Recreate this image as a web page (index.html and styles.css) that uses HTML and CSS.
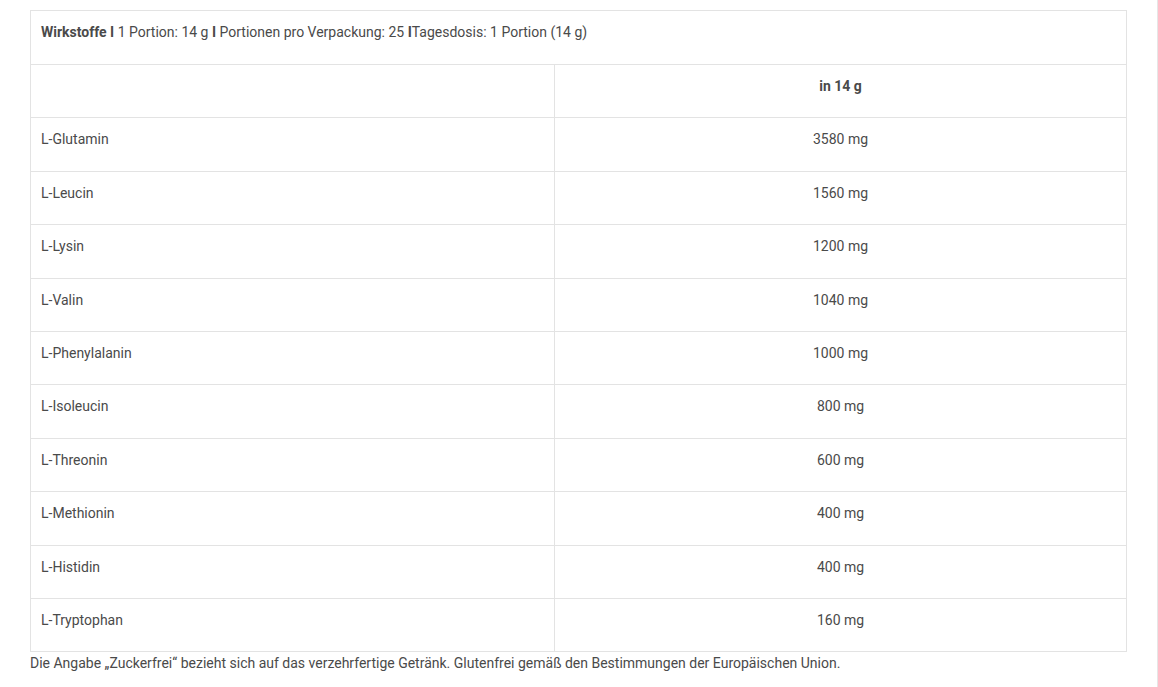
FILE: index.html
```html
<!DOCTYPE html>
<html lang="de">
<head>
<meta charset="utf-8">
<title>Wirkstoffe</title>
<link rel="stylesheet" href="styles.css">
</head>
<body>
<div class="page">
  <table class="nutri">
    <colgroup><col class="c-name"><col class="c-val"></colgroup>
    <tr class="intro"><td colspan="2"><b>Wirkstoffe I</b> 1 Portion: 14 g <b>I</b> Portionen pro Verpackung: 25 <b>I</b>Tagesdosis: 1 Portion (14 g)</td></tr>
    <tr><td></td><td class="val"><b>in 14 g</b></td></tr>
    <tr><td>L-Glutamin</td><td class="val">3580 mg</td></tr>
    <tr><td>L-Leucin</td><td class="val">1560 mg</td></tr>
    <tr><td>L-Lysin</td><td class="val">1200 mg</td></tr>
    <tr><td>L-Valin</td><td class="val">1040 mg</td></tr>
    <tr><td>L-Phenylalanin</td><td class="val">1000 mg</td></tr>
    <tr><td>L-Isoleucin</td><td class="val">800 mg</td></tr>
    <tr><td>L-Threonin</td><td class="val">600 mg</td></tr>
    <tr><td>L-Methionin</td><td class="val">400 mg</td></tr>
    <tr><td>L-Histidin</td><td class="val">400 mg</td></tr>
    <tr><td>L-Tryptophan</td><td class="val">160 mg</td></tr>
  </table>
  <p class="note">Die Angabe „Zuckerfrei“ bezieht sich auf das verzehrfertige Getränk. Glutenfrei gemäß den Bestimmungen der Europäischen Union.</p>
</div>
</body>
</html>
```
FILE: styles.css
```css
html, body {
  margin: 0;
  padding: 0;
  background: #fff;
}
body {
  font-family: Roboto, "Liberation Sans", Arial, sans-serif;
  font-size: 14px;
  line-height: 22px;
  color: #4a4a4a;
}
.page {
  width: 1158px;
  min-height: 687px;
  box-sizing: border-box;
  padding: 10px 31px 0 30px;
  border-right: 1px solid #e6e6e6;
}
.nutri {
  width: 1097px;
  border-collapse: collapse;
  table-layout: fixed;
}
.c-name { width: 524px; }
.nutri td {
  border: 1px solid #e3e3e3;
  padding: 10px 10px 20.4px;
  vertical-align: top;
  text-align: left;
}
.nutri .intro td {
  padding-bottom: 21px;
}
.nutri td.val {
  text-align: center;
}
.nutri b {
  font-weight: 700;
}
.note {
  margin: 0;
}
```
